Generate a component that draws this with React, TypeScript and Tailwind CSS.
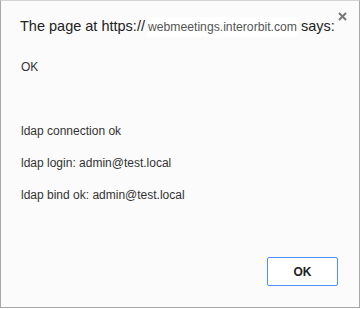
export default function App() {
  const lines = ['OK', '', '', '', 'ldap connection ok', '', 'ldap login: admin@test.local', '', 'ldap bind ok: admin@test.local'];

  return (
    <div className="w-[362px] h-[309px] bg-white font-['Liberation_Sans',Arial,sans-serif]">
      <div className="relative flex flex-col w-[360px] h-[308px] bg-[#fbfbfb] border border-[#a9a9a9] border-t-[#d4d4d4]">
        <button className="absolute right-[12px] top-[11px] leading-none">
          <svg width="9" height="9" viewBox="0 0 9 9">
            <path d="M1 1 L8 8 M8 1 L1 8" stroke="#787878" strokeWidth="2" />
          </svg>
        </button>

        <h1 className="mt-[15px] ml-[19px] flex items-baseline text-[14.5px] leading-5 text-[#222]">
          The page at https://
          <span className="ml-[2px] mr-[3px] bg-white px-[1px] text-[12.2px] text-[#555]">webmeetings.interorbit.com</span>
          says:
        </h1>

        <div className="mt-[22px] ml-[20px] text-[12px] leading-4 text-[#333]">
          {lines.map((l, i) => (
            <div key={i} className="h-4">
              {l}
            </div>
          ))}
        </div>

        <div className="mt-auto mb-[21px] mr-[21px] flex justify-end">
          <button className="w-[71px] h-[29px] rounded-[2px] border border-[#4d90fe] bg-white text-[12px] font-bold text-[#222]">
            OK
          </button>
        </div>
      </div>
    </div>
  );
}
